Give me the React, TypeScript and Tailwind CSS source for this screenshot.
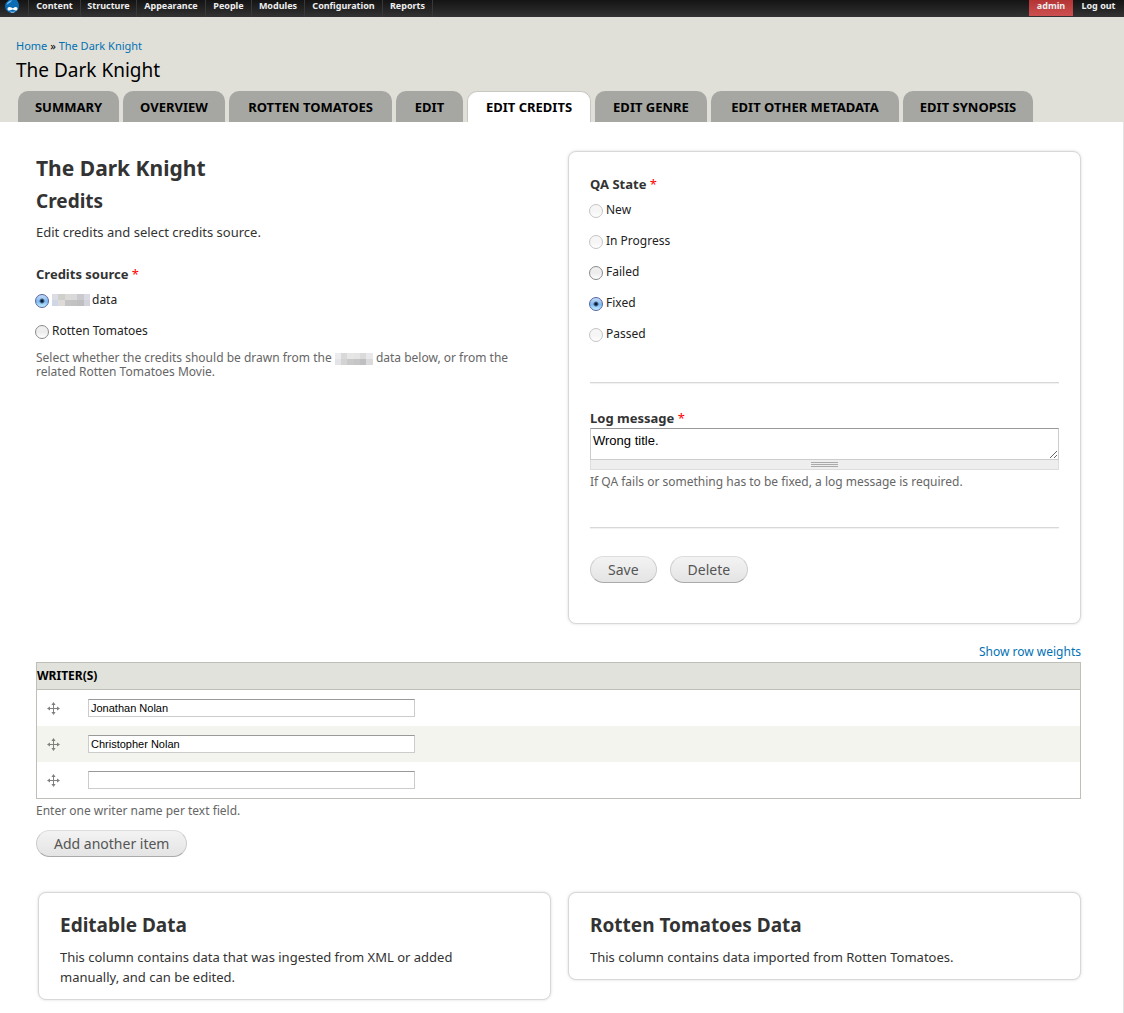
import React from "react";

const menu = [
  { label: "Content", width: "w-[52px]" },
  { label: "Structure", width: "w-[56px]" },
  { label: "Appearance", width: "w-[69px]" },
  { label: "People", width: "w-[46px]" },
  { label: "Modules", width: "w-[53px]" },
  { label: "Configuration", width: "w-[78px]" },
  { label: "Reports", width: "w-[50px]" },
];

const tabs = [
  { label: "Summary", width: "w-[101px]", active: false },
  { label: "Overview", width: "w-[102px]", active: false },
  { label: "Rotten Tomatoes", width: "w-[163px]", active: false },
  { label: "Edit", width: "w-[67px]", active: false },
  { label: "Edit Credits", width: "w-[124px]", active: true },
  { label: "Edit Genre", width: "w-[112px]", active: false },
  { label: "Edit Other Metadata", width: "w-[188px]", active: false },
  { label: "Edit Synopsis", width: "w-[130px]", active: false },
];

const states = [
  { label: "New", disabled: true },
  { label: "In Progress", disabled: true },
  { label: "Failed", disabled: false },
  { label: "Fixed", disabled: false },
  { label: "Passed", disabled: true },
];

const writers = ["Jonathan Nolan", "Christopher Nolan", ""];

function Drop() {
  return (
    <svg viewBox="0 0 16 18" className="-mt-1 block h-[18px] w-4" aria-hidden="true">
      <path d="M9 0c1 2 6 4 6 10a7 7 0 0 1-14 0C1 5 7 4 9 0Z" fill="#0a6cb5" />
      <path d="M2.500 9c.5-3 3-4 5.500-5-1 3-4 3.500-5.500 5Z" fill="#6db8e8" />
      <path
        d="M5.500 11c1.700 0 2.300 1.200 3.300 1.200s1.500-1.200 2.800-1.200c1.300 0 1.900.8 1.900 1.800s-.7 1.800-1.800 1.800c-1.200 0-1.900-1-3-1s-1.700 1-3.300 1c-1.300 0-1.900-.8-1.900-1.700 0-1.100.8-1.900 2-1.900Z"
        fill="#fff"
      />
      <path d="M6.500 15.800c1 .7 3 .7 4 0" stroke="#d6e8f5" strokeWidth=".9" fill="none" />
    </svg>
  );
}

function MoveIcon() {
  return (
    <svg viewBox="0 0 13 13" className="block size-[13px]" fill="#808080" aria-hidden="true">
      <path d="M6 1h1v11H6zM1 6h11v1H1z" />
      <path d="M6.500 0 8.600 3H4.400ZM6.500 13 4.400 10h4.200ZM0 6.500 3 4.400v4.200ZM13 6.500 10 8.600V4.400Z" />
    </svg>
  );
}

function Redacted({ colors }: { colors: string[] }) {
  return (
    <span className="inline-grid h-3 w-[38px] grid-cols-6 align-middle">
      {colors.map((c, i) => (
        <span key={i} style={{ backgroundColor: c }} />
      ))}
    </span>
  );
}

function Radio({
  name,
  disabled = false,
  checked = false,
  children,
}: {
  name: string;
  disabled?: boolean;
  checked?: boolean;
  children: React.ReactNode;
}) {
  return (
    <label className="flex h-5 w-fit items-center gap-[3px] text-xs text-[#222]">
      <input
        type="radio"
        name={name}
        disabled={disabled}
        defaultChecked={checked}
        className="mt-px -ml-px size-[14px] shrink-0 appearance-none rounded-full border border-[#8a8a8a] bg-linear-to-b from-[#f0f0f0] via-[#ececec] to-white checked:border-[#5563a0] checked:bg-[radial-gradient(circle,#0b1c33_0_1px,transparent_3px),linear-gradient(#c5dcf5,#7fb9f2_55%,#c4f0ff)] disabled:opacity-50"
      />
      <span className="flex items-center leading-5">{children}</span>
    </label>
  );
}

function Required() {
  return <span className="font-normal text-[#f00]">*</span>;
}

function PillButton({ children }: { children: React.ReactNode }) {
  return (
    <button
      type="button"
      className="h-[27px] rounded-full border border-[#ccc] border-t-[#ddd] border-b-[#aaa] bg-linear-to-b from-[#f3f3f3] to-[#e4e4e4] px-[17px] text-sm leading-5 text-[#555]"
    >
      {children}
    </button>
  );
}

const card = "rounded-lg border border-[#d8d8d8] bg-white px-[21px] shadow-[0_0_3px_rgba(0,0,0,0.15)]";
const rule = "h-px border-0 bg-[#d8d8d8] shadow-[0_1px_1px_#eeeeee]";

export default function App() {
  return (
    <div className="min-h-screen border-r border-[#e2e2e2] bg-white font-['Noto_Sans',sans-serif] text-[#333]">
      <nav className="-mr-px flex h-[17px] overflow-hidden bg-linear-to-b from-[#141414] to-[#333] text-center text-[9px] leading-3 font-bold text-[#eee]">
        <a href="#home" aria-label="Home" className="w-[28px] shrink-0 pl-1">
          <Drop />
        </a>
        {menu.map((m) => (
          <a key={m.label} href={"#" + m.label} className={m.width + " shrink-0 border-l border-[#383838]"}>
            {m.label}
          </a>
        ))}
        <span className="flex-1 border-l border-[#383838]" />
        <a href="#admin" className="h-4 w-11 bg-linear-to-b from-[#b43434] to-[#cd5050]">
          admin
        </a>
        <a href="#logout" className="w-[51px]">
          Log out
        </a>
      </nav>

      <header className="-mr-px bg-[#e0e0d8] px-4 pt-[21px]">
        <div className="text-[11px] leading-4 text-black">
          <a href="#home" className="text-[#0071b3]">Home</a> »{" "}
          <a href="#movie" className="text-[#0071b3]">The Dark Knight</a>
        </div>
        <h1 className="mt-1 text-[19px] leading-6 text-black">The Dark Knight</h1>
        <div className="mt-[9px] flex items-end gap-1 pl-[2px] text-center text-[13px] font-bold text-black uppercase">
          {tabs.map((t) => (
            <a
              key={t.label}
              href="#tab"
              className={
                t.width +
                (t.active
                  ? " h-[31px] rounded-t-[10px] border border-b-0 border-[#c8c8c0] bg-white leading-[31px]"
                  : " h-[31px] rounded-t-[10px] bg-[#a6a7a2] leading-[33px]")
              }
            >
              {t.label}
            </a>
          ))}
        </div>
      </header>

      <main className="pt-[29px] pr-[42px] pb-3 pl-9">
        <div className="grid grid-cols-2 gap-[17px] pl-[2px]">
          <section className="-ml-[2px] pt-[3px]">
            <h2 className="text-[21px] leading-7 font-bold">The Dark Knight</h2>
            <h3 className="mt-[7px] text-[19px] leading-6 font-bold">Credits</h3>
            <p className="mt-[9px] text-[13px] leading-5">Edit credits and select credits source.</p>
            <fieldset className="mt-[22px]">
              <legend className="text-[13px] leading-5 font-bold">
                Credits source <Required />
              </legend>
              <div className="mt-[6px] flex flex-col gap-[11px]">
                <Radio name="source" checked>
                  <Redacted
                    colors={["#dcdce4", "#cfcfcb", "#dbdad8", "#d9d9d9", "#cacace", "#dadae4", "#cfd7e6", "#dddad8", "#c5c4c4", "#c2c2c2", "#bfbfc1", "#d3d3dc"]}
                  />
                  <span className="ml-[2px]">data</span>
                </Radio>
                <Radio name="source">Rotten Tomatoes</Radio>
              </div>
              <p className="mt-[10px] pr-6 text-xs leading-[14px] text-[#666]">
                <span>Select whether the credits should be drawn from the</span>{" "}
                <Redacted
                  colors={["#ececee", "#d9d9d9", "#e6e6e6", "#e4e4e4", "#dadada", "#e8e8ea", "#e4e4e8", "#d3d3d3", "#c9c9c9", "#c5c5c5", "#bfbfc1", "#dadadc"]}
                />{" "}
                <span>data below, or from the</span> <span>related Rotten Tomatoes Movie.</span>
              </p>
            </fieldset>
          </section>

          <section className={card + " pt-[22px] pb-10"}>
            <fieldset>
              <legend className="text-[13px] leading-5 font-bold">
                QA State <Required />
              </legend>
              <div className="mt-[6px] flex flex-col gap-[11px]">
                {states.map((s) => (
                  <Radio key={s.label} name="state" disabled={s.disabled} checked={s.label === "Fixed"}>
                    {s.label}
                  </Radio>
                ))}
              </div>
            </fieldset>
            <hr className={rule + " mt-[38px]"} />
            <label htmlFor="log" className="mt-[25px] block text-[13px] leading-5 font-bold">
              Log message <Required />
            </label>
            <textarea
              id="log"
              defaultValue="Wrong title."
              className="block h-8 w-full resize-y border border-[#ccc] border-t-[#999] px-[2px] py-1 font-['Liberation_Sans',sans-serif] text-[13px] leading-4 text-black"
            />
            <div className="flex h-[10px] flex-col items-center gap-px border border-t-0 border-[#ddd] bg-[#eee] pt-[2px]">
              <span className="h-px w-[27px] bg-[#aaa]" />
              <span className="h-px w-[27px] bg-[#aaa]" />
              <span className="h-px w-[27px] bg-[#aaa]" />
            </div>
            <p className="mt-[5px] text-xs leading-[14px] text-[#666]">
              If QA fails or something has to be fixed, a log message is required.
            </p>
            <hr className={rule + " mt-[38px]"} />
            <div className="mt-7 flex gap-[13px]">
              <PillButton>Save</PillButton>
              <PillButton>Delete</PillButton>
            </div>
          </section>
        </div>

        <div className="mt-5 mb-[2px] text-right text-xs leading-4">
          <a href="#weights" className="text-[#0071b3]">Show row weights</a>
        </div>
        <table className="w-full border-separate border-spacing-0 border border-[#bebfb9]">
          <thead>
            <tr className="h-[27px] bg-[#e1e2dc]">
              <th colSpan={2} className="border-b border-[#bebfb9] p-0 text-left text-xs leading-5 font-bold text-black">
                WRITER(S)
              </th>
            </tr>
          </thead>
          <tbody>
            {writers.map((w, i) => (
              <tr key={i} className="h-9 even:bg-[#f3f4ee]">
                <td className="w-[51px] p-0 pl-[10px]">
                  <MoveIcon />
                </td>
                <td className="p-0">
                  <input
                    type="text"
                    aria-label={"Writer " + (i + 1)}
                    defaultValue={w}
                    className="block h-[18px] w-[327px] border border-[#ccc] border-t-[#999] bg-white px-[2px] font-['Liberation_Sans',sans-serif] text-[11px] leading-4 text-black"
                  />
                </td>
              </tr>
            ))}
          </tbody>
        </table>
        <p className="mt-[5px] mb-3 text-xs leading-[14px] text-[#666]">Enter one writer name per text field.</p>
        <PillButton>Add another item</PillButton>

        <div className="mt-[35px] grid grid-cols-2 items-start gap-[17px] pl-[2px]">
          <section className={card + " pt-5 pb-3"}>
            <h3 className="text-[19px] leading-6 font-bold">Editable Data</h3>
            <p className="mt-[10px] pr-8 text-[13px] leading-5">
              This column contains data that was ingested from XML or added manually, and can be edited.
            </p>
          </section>
          <section className={card + " pt-5 pb-3"}>
            <h3 className="text-[19px] leading-6 font-bold">Rotten Tomatoes Data</h3>
            <p className="mt-[10px] text-[13px] leading-5">This column contains data imported from Rotten Tomatoes.</p>
          </section>
        </div>
      </main>
    </div>
  );
}
